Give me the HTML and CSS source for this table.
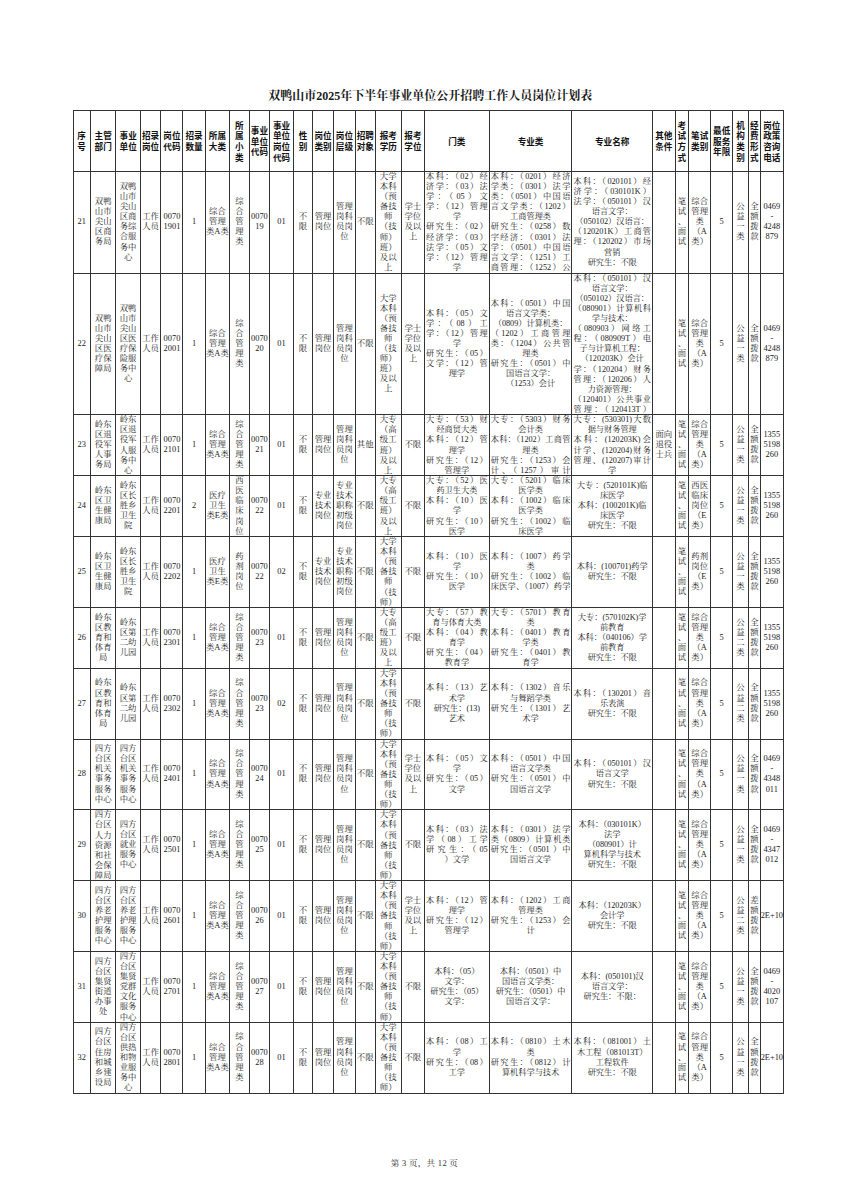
FILE: index.html
```html
<!DOCTYPE html>
<html lang="zh-CN">
<head>
<meta charset="utf-8">
<title>双鸭山市2025年下半年事业单位公开招聘工作人员岗位计划表</title>
<link rel="stylesheet" href="styles.css">
</head>
<body>
<div class="sheet">
<h1 class="title">双鸭山市2025年下半年事业单位公开招聘工作人员岗位计划表</h1>
<table class="plan">
<colgroup>
<col class="k1"><col class="k2"><col class="k3"><col class="k4"><col class="k5"><col class="k6"><col class="k7"><col class="k8"><col class="k9"><col class="k10"><col class="k11"><col class="k12"><col class="k13"><col class="k14"><col class="k15"><col class="k16"><col class="k17"><col class="k18"><col class="k19"><col class="k20"><col class="k21"><col class="k22"><col class="k23"><col class="k24"><col class="k25"><col class="k26">
</colgroup>
<thead>
<tr class="hd">
<th><div>序<br>号</div></th>
<th><div>主管<br>部门</div></th>
<th><div>事业<br>单位</div></th>
<th><div>招录<br>岗位</div></th>
<th><div>岗位<br>代码</div></th>
<th><div>招录<br>数量</div></th>
<th><div>所属<br>大类</div></th>
<th><div>所<br>属<br>小<br>类</div></th>
<th><div>事业<br>单位<br>代码</div></th>
<th><div>事业<br>单位<br>岗位<br>代码</div></th>
<th><div>性<br>别</div></th>
<th><div>岗位<br>类别</div></th>
<th><div>岗位<br>层级</div></th>
<th><div>招聘<br>对象</div></th>
<th><div>报考<br>学历</div></th>
<th><div>报考<br>学位</div></th>
<th><div>门类</div></th>
<th><div>专业类</div></th>
<th><div>专业名称</div></th>
<th><div>其他<br>条件</div></th>
<th><div>考<br>试<br>方<br>式</div></th>
<th><div>笔试<br>类别</div></th>
<th><div>最低<br>服务<br>年限</div></th>
<th><div>机<br>构<br>类<br>别</div></th>
<th><div>经<br>费<br>形<br>式</div></th>
<th><div>岗位<br>政策<br>咨询<br>电话</div></th>
</tr>
</thead>
<tbody>
<!-- 21 -->
<tr class="a">
<td><div>21</div></td>
<td><div>双鸭<br>山市<br>尖山<br>区商<br>务局</div></td>
<td><div>双鸭<br>山市<br>尖山<br>区商<br>务综<br>合服<br>务中<br>心</div></td>
<td><div>工作<br>人员</div></td>
<td><div>0070<br>1901</div></td>
<td><div>1</div></td>
<td><div>综合<br>管理<br>类A类</div></td>
<td><div>综<br>合<br>管<br>理<br>类</div></td>
<td><div>0070<br>19</div></td>
<td><div>01</div></td>
<td><div>不<br>限</div></td>
<td><div>管理<br>岗位</div></td>
<td><div>管理<br>岗科<br>员岗<br>位</div></td>
<td><div>不限</div></td>
<td><div>大学<br>本科<br>（预<br>备技<br>师<br>（技<br>师）<br>班）<br>及以<br>上</div></td>
<td><div>学士<br>学位<br>及以<br>上</div></td>
<td class="w"><div><span>本科：（02）经</span><span>济学：（03）法</span><span>学：（05）文</span><span>学：（12）管理</span><span class="e">学</span><span>研究生：（02）</span><span>经济学：（03）</span><span>法学：（05）文</span><span>学：（12）管理</span><span class="e">学</span></div></td>
<td class="w"><div><span>本科：（0201）经济</span><span>学类：（0301）法学</span><span>类：（0501）中国语</span><span>言文学类：（1202）</span><span class="e">工商管理类</span><span>研究生：（0258）数</span><span>字经济：（0301）法</span><span>学：（0501）中国语</span><span>言文学：（1251）工</span><span>商管理：（1252）公</span><span class="e">共管理</span></div></td>
<td class="w"><div><span>本科：（020101）经</span><span>济学：（030101K）</span><span>法学：（050101）汉</span><span class="e">语言文学：</span><span class="e">（050102）汉语言：</span><span>（120201K）工商管</span><span>理：（120202）市场</span><span class="e">营销</span><span class="e">研究生：不限</span></div></td>
<td><div></div></td>
<td><div>笔<br>试<br>、<br>面<br>试</div></td>
<td><div>综合<br>管理<br>类<br>（A<br>类）</div></td>
<td><div>5</div></td>
<td><div>公<br>益<br>一<br>类</div></td>
<td><div>全<br>额<br>拨<br>款</div></td>
<td><div>0469<br>-<br>4248<br>879</div></td>
</tr>
<!-- 22 -->
<tr class="b">
<td><div>22</div></td>
<td><div>双鸭<br>山市<br>尖山<br>区医<br>疗保<br>障局</div></td>
<td><div>双鸭<br>山市<br>尖山<br>区医<br>疗保<br>险服<br>务中<br>心</div></td>
<td><div>工作<br>人员</div></td>
<td><div>0070<br>2001</div></td>
<td><div>1</div></td>
<td><div>综合<br>管理<br>类A类</div></td>
<td><div>综<br>合<br>管<br>理<br>类</div></td>
<td><div>0070<br>20</div></td>
<td><div>01</div></td>
<td><div>不<br>限</div></td>
<td><div>管理<br>岗位</div></td>
<td><div>管理<br>岗科<br>员岗<br>位</div></td>
<td><div>不限</div></td>
<td><div>大学<br>本科<br>（预<br>备技<br>师<br>（技<br>师）<br>班）<br>及以<br>上</div></td>
<td><div>学士<br>学位<br>及以<br>上</div></td>
<td class="w"><div><span>本科：（05）文</span><span>学：（08）工</span><span>学：（12）管理</span><span class="e">学</span><span>研究生：（05）</span><span>文学：（12）管</span><span class="e">理学</span></div></td>
<td class="w"><div><span>本科：（0501）中国</span><span class="e">语言文学类：</span><span class="e">（0809）计算机类：</span><span>（1202）工商管理</span><span>类：（1204）公共管</span><span class="e">理类</span><span>研究生：（0501）中</span><span class="e">国语言文学：</span><span class="e">（1253）会计</span></div></td>
<td class="w"><div><span>本科：（050101）汉</span><span class="e">语言文学：</span><span class="e">（050102）汉语言：</span><span>（080901）计算机科</span><span class="e">学与技术：</span><span>（080903）网络工</span><span>程：（080909T）电</span><span class="e">子与计算机工程：</span><span class="e">（120203K）会计</span><span>学：（120204）财务</span><span>管理：（120206）人</span><span class="e">力资源管理：</span><span>（120401）公共事业</span><span>管理：（120413T）</span></div></td>
<td><div></div></td>
<td><div>笔<br>试<br>、<br>面<br>试</div></td>
<td><div>综合<br>管理<br>类<br>（A<br>类）</div></td>
<td><div>5</div></td>
<td><div>公<br>益<br>一<br>类</div></td>
<td><div>全<br>额<br>拨<br>款</div></td>
<td><div>0469<br>-<br>4248<br>879</div></td>
</tr>
<!-- 23 -->
<tr class="c">
<td><div>23</div></td>
<td><div>岭东<br>区退<br>役军<br>人事<br>务局</div></td>
<td><div>岭东<br>区退<br>役军<br>人服<br>务中<br>心</div></td>
<td><div>工作<br>人员</div></td>
<td><div>0070<br>2101</div></td>
<td><div>1</div></td>
<td><div>综合<br>管理<br>类A类</div></td>
<td><div>综<br>合<br>管<br>理<br>类</div></td>
<td><div>0070<br>21</div></td>
<td><div>01</div></td>
<td><div>不<br>限</div></td>
<td><div>管理<br>岗位</div></td>
<td><div>管理<br>岗科<br>员岗<br>位</div></td>
<td><div>其他</div></td>
<td><div>大专<br>（高<br>级工<br>班）<br>及以<br>上</div></td>
<td><div>不限</div></td>
<td class="w"><div><span>大专：（53）财</span><span class="e">经商贸大类</span><span>本科：（12）管</span><span class="e">理学</span><span>研究生：（12）</span><span class="e">管理学</span></div></td>
<td class="w"><div><span>大专：（5303）财务</span><span class="e">会计类</span><span>本科：（1202）工商管</span><span class="e">理类</span><span>研究生：（1253）会</span><span>计、（1257）审计</span></div></td>
<td class="w"><div><span>大专：(530301)大数</span><span class="e">据与财务管理</span><span>本科：(120203K)会</span><span>计学、(120204)财务</span><span>管理、(120207)审计</span><span class="e">学</span></div></td>
<td><div>面向<br>退役<br>士兵</div></td>
<td><div>笔<br>试<br>、<br>面<br>试</div></td>
<td><div>综合<br>管理<br>类<br>（A<br>类）</div></td>
<td><div>5</div></td>
<td><div>公<br>益<br>一<br>类</div></td>
<td><div>全<br>额<br>拨<br>款</div></td>
<td><div>1355<br>5198<br>260</div></td>
</tr>
<!-- 24 -->
<tr class="c">
<td><div>24</div></td>
<td><div>岭东<br>区卫<br>生健<br>康局</div></td>
<td><div>岭东<br>区长<br>胜乡<br>卫生<br>院</div></td>
<td><div>工作<br>人员</div></td>
<td><div>0070<br>2201</div></td>
<td><div>2</div></td>
<td><div>医疗<br>卫生<br>类E类</div></td>
<td><div>西<br>医<br>临<br>床<br>岗<br>位</div></td>
<td><div>0070<br>22</div></td>
<td><div>01</div></td>
<td><div>不<br>限</div></td>
<td><div>专业<br>技术<br>岗位</div></td>
<td><div>专业<br>技术<br>职称<br>初级<br>岗位</div></td>
<td><div>不限</div></td>
<td><div>大专<br>（高<br>级工<br>班）<br>及以<br>上</div></td>
<td><div>不限</div></td>
<td class="w"><div><span>大专：（52）医</span><span class="e">药卫生大类</span><span>本科：（10）医</span><span class="e">学</span><span>研究生：（10）</span><span class="e">医学</span></div></td>
<td class="w"><div><span>大专：（5201）临床</span><span class="e">医学类</span><span>本科：（1002）临床</span><span class="e">医学类</span><span>研究生：（1002）临</span><span class="e">床医学</span></div></td>
<td class="w"><div><span class="e">大专 ：(520101K)临</span><span class="e">床医学</span><span class="e">本科：(100201K)临</span><span class="e">床医学</span><span class="e">研究生：不限</span></div></td>
<td><div></div></td>
<td><div>笔<br>试<br>、<br>面<br>试</div></td>
<td><div>西医<br>临床<br>岗位<br>（E<br>类）</div></td>
<td><div>5</div></td>
<td><div>公<br>益<br>一<br>类</div></td>
<td><div>全<br>额<br>拨<br>款</div></td>
<td><div>1355<br>5198<br>260</div></td>
</tr>
<!-- 25 -->
<tr class="d">
<td><div>25</div></td>
<td><div>岭东<br>区卫<br>生健<br>康局</div></td>
<td><div>岭东<br>区长<br>胜乡<br>卫生<br>院</div></td>
<td><div>工作<br>人员</div></td>
<td><div>0070<br>2202</div></td>
<td><div>1</div></td>
<td><div>医疗<br>卫生<br>类E类</div></td>
<td><div>药<br>剂<br>岗<br>位</div></td>
<td><div>0070<br>22</div></td>
<td><div>02</div></td>
<td><div>不<br>限</div></td>
<td><div>专业<br>技术<br>岗位</div></td>
<td><div>专业<br>技术<br>职称<br>初级<br>岗位</div></td>
<td><div>不限</div></td>
<td><div>大学<br>本科<br>（预<br>备技<br>师<br>（技<br>师）<br>班）<br>及以<br>上</div></td>
<td><div>不限</div></td>
<td class="w"><div><span>本科：（10）医</span><span class="e">学</span><span>研究生：（10）</span><span class="e">医学</span></div></td>
<td class="w"><div><span>本科：（1007）药学</span><span class="e">类</span><span>研究生：（1002）临</span><span>床医学、（1007）药学</span></div></td>
<td class="w"><div><span class="e">本科：(100701)药学</span><span class="e">研究生：不限</span></div></td>
<td><div></div></td>
<td><div>笔<br>试<br>、<br>面<br>试</div></td>
<td><div>药剂<br>岗位<br>（E<br>类）</div></td>
<td><div>5</div></td>
<td><div>公<br>益<br>一<br>类</div></td>
<td><div>全<br>额<br>拨<br>款</div></td>
<td><div>1355<br>5198<br>260</div></td>
</tr>
<!-- 26 -->
<tr class="c">
<td><div>26</div></td>
<td><div>岭东<br>区教<br>育和<br>体育<br>局</div></td>
<td><div>岭东<br>区第<br>二幼<br>儿园</div></td>
<td><div>工作<br>人员</div></td>
<td><div>0070<br>2301</div></td>
<td><div>1</div></td>
<td><div>综合<br>管理<br>类A类</div></td>
<td><div>综<br>合<br>管<br>理<br>类</div></td>
<td><div>0070<br>23</div></td>
<td><div>01</div></td>
<td><div>不<br>限</div></td>
<td><div>管理<br>岗位</div></td>
<td><div>管理<br>岗科<br>员岗<br>位</div></td>
<td><div>不限</div></td>
<td><div>大专<br>（高<br>级工<br>班）<br>及以<br>上</div></td>
<td><div>不限</div></td>
<td class="w"><div><span>大专：（57）教</span><span class="e">育与体育大类</span><span>本科：（04）教</span><span class="e">育学</span><span>研究生：（04）</span><span class="e">教育学</span></div></td>
<td class="w"><div><span>大专：（5701）教育</span><span class="e">类</span><span>本科：（0401）教育</span><span class="e">学类</span><span>研究生：（0401）教</span><span class="e">育学</span></div></td>
<td class="w"><div><span class="e">大专：(570102K)学</span><span class="e">前教育</span><span class="e">本科：（040106）学</span><span class="e">前教育</span><span class="e">研究生：不限</span></div></td>
<td><div></div></td>
<td><div>笔<br>试<br>、<br>面<br>试</div></td>
<td><div>综合<br>管理<br>类<br>（A<br>类）</div></td>
<td><div>5</div></td>
<td><div>公<br>益<br>二<br>类</div></td>
<td><div>全<br>额<br>拨<br>款</div></td>
<td><div>1355<br>5198<br>260</div></td>
</tr>
<!-- 27 -->
<tr class="d">
<td><div>27</div></td>
<td><div>岭东<br>区教<br>育和<br>体育<br>局</div></td>
<td><div>岭东<br>区第<br>二幼<br>儿园</div></td>
<td><div>工作<br>人员</div></td>
<td><div>0070<br>2302</div></td>
<td><div>1</div></td>
<td><div>综合<br>管理<br>类A类</div></td>
<td><div>综<br>合<br>管<br>理<br>类</div></td>
<td><div>0070<br>23</div></td>
<td><div>02</div></td>
<td><div>不<br>限</div></td>
<td><div>管理<br>岗位</div></td>
<td><div>管理<br>岗科<br>员岗<br>位</div></td>
<td><div>不限</div></td>
<td><div>大学<br>本科<br>（预<br>备技<br>师<br>（技<br>师）<br>班）<br>及以<br>上</div></td>
<td><div>不限</div></td>
<td class="w"><div><span>本科：（13）艺</span><span class="e">术学</span><span class="e">研究生：(13)</span><span class="e">艺术</span></div></td>
<td class="w"><div><span>本科：（1302）音乐</span><span class="e">与舞蹈学类</span><span>研究生：（1301）艺</span><span class="e">术学</span></div></td>
<td class="w"><div><span>本科：（130201）音</span><span class="e">乐表演</span><span class="e">研究生：不限</span></div></td>
<td><div></div></td>
<td><div>笔<br>试<br>、<br>面<br>试</div></td>
<td><div>综合<br>管理<br>类<br>（A<br>类）</div></td>
<td><div>5</div></td>
<td><div>公<br>益<br>二<br>类</div></td>
<td><div>全<br>额<br>拨<br>款</div></td>
<td><div>1355<br>5198<br>260</div></td>
</tr>
<!-- 28 -->
<tr class="d">
<td><div>28</div></td>
<td><div>四方<br>台区<br>机关<br>事务<br>服务<br>中心</div></td>
<td><div>四方<br>台区<br>机关<br>事务<br>服务<br>中心</div></td>
<td><div>工作<br>人员</div></td>
<td><div>0070<br>2401</div></td>
<td><div>1</div></td>
<td><div>综合<br>管理<br>类A类</div></td>
<td><div>综<br>合<br>管<br>理<br>类</div></td>
<td><div>0070<br>24</div></td>
<td><div>01</div></td>
<td><div>不<br>限</div></td>
<td><div>管理<br>岗位</div></td>
<td><div>管理<br>岗科<br>员岗<br>位</div></td>
<td><div>不限</div></td>
<td><div>大学<br>本科<br>（预<br>备技<br>师<br>（技<br>师）<br>班）<br>及以<br>上</div></td>
<td><div>学士<br>学位<br>及以<br>上</div></td>
<td class="w"><div><span>本科：（05）文</span><span class="e">学</span><span>研究生：（05）</span><span class="e">文学</span></div></td>
<td class="w"><div><span>本科：（0501）中国</span><span class="e">语言文学类</span><span>研究生：（0501）中</span><span class="e">国语言文学</span></div></td>
<td class="w"><div><span>本科：（050101）汉</span><span class="e">语言文学</span><span class="e">研究生：不限</span></div></td>
<td><div></div></td>
<td><div>笔<br>试<br>、<br>面<br>试</div></td>
<td><div>综合<br>管理<br>类<br>（A<br>类）</div></td>
<td><div>5</div></td>
<td><div>公<br>益<br>一<br>类</div></td>
<td><div>全<br>额<br>拨<br>款</div></td>
<td><div>0469<br>-<br>4348<br>011</div></td>
</tr>
<!-- 29 -->
<tr class="d">
<td><div>29</div></td>
<td><div>四方<br>台区<br>人力<br>资源<br>和社<br>会保<br>障局</div></td>
<td><div>四方<br>台区<br>就业<br>服务<br>中心</div></td>
<td><div>工作<br>人员</div></td>
<td><div>0070<br>2501</div></td>
<td><div>1</div></td>
<td><div>综合<br>管理<br>类A类</div></td>
<td><div>综<br>合<br>管<br>理<br>类</div></td>
<td><div>0070<br>25</div></td>
<td><div>01</div></td>
<td><div>不<br>限</div></td>
<td><div>管理<br>岗位</div></td>
<td><div>管理<br>岗科<br>员岗<br>位</div></td>
<td><div>不限</div></td>
<td><div>大学<br>本科<br>（预<br>备技<br>师<br>（技<br>师）<br>班）<br>及以<br>上</div></td>
<td><div>不限</div></td>
<td class="w"><div><span>本科：（03）法</span><span>学（08）工学</span><span>研究生：（05</span><span class="e">）文学</span></div></td>
<td class="w"><div><span>本科：（0301）法学</span><span>类（0809）计算机类</span><span>研究生：（0501 ）中</span><span class="e">国语言文学</span></div></td>
<td class="w"><div><span class="e">本科：（030101K）</span><span class="e">法学</span><span class="e">（080901）计</span><span class="e">算机科学与技术</span><span class="e">研究生：不限</span></div></td>
<td><div></div></td>
<td><div>笔<br>试<br>、<br>面<br>试</div></td>
<td><div>综合<br>管理<br>类<br>（A<br>类）</div></td>
<td><div>5</div></td>
<td><div>公<br>益<br>一<br>类</div></td>
<td><div>全<br>额<br>拨<br>款</div></td>
<td><div>0469<br>-<br>4347<br>012</div></td>
</tr>
<!-- 30 -->
<tr class="d">
<td><div>30</div></td>
<td><div>四方<br>台区<br>养老<br>护理<br>服务<br>中心</div></td>
<td><div>四方<br>台区<br>养老<br>护理<br>服务<br>中心</div></td>
<td><div>工作<br>人员</div></td>
<td><div>0070<br>2601</div></td>
<td><div>1</div></td>
<td><div>综合<br>管理<br>类A类</div></td>
<td><div>综<br>合<br>管<br>理<br>类</div></td>
<td><div>0070<br>26</div></td>
<td><div>01</div></td>
<td><div>不<br>限</div></td>
<td><div>管理<br>岗位</div></td>
<td><div>管理<br>岗科<br>员岗<br>位</div></td>
<td><div>不限</div></td>
<td><div>大学<br>本科<br>（预<br>备技<br>师<br>（技<br>师）<br>班）<br>及以<br>上</div></td>
<td><div>学士<br>学位<br>及以<br>上</div></td>
<td class="w"><div><span>本科：（12）管</span><span class="e">理学</span><span>研究生：（12）</span><span class="e">管理学</span></div></td>
<td class="w"><div><span>本科：（1202）工商</span><span class="e">管理类</span><span>研究生：（1253）会</span><span class="e">计</span></div></td>
<td class="w"><div><span class="e">本科：（120203K）</span><span class="e">会计学</span><span class="e">研究生：不限</span></div></td>
<td><div></div></td>
<td><div>笔<br>试<br>、<br>面<br>试</div></td>
<td><div>综合<br>管理<br>类<br>（A<br>类）</div></td>
<td><div>5</div></td>
<td><div>公<br>益<br>二<br>类</div></td>
<td><div>差<br>额<br>拨<br>款</div></td>
<td><div>2E+10</div></td>
</tr>
<!-- 31 -->
<tr class="d">
<td><div>31</div></td>
<td><div>四方<br>台区<br>集贤<br>街道<br>办事<br>处</div></td>
<td><div>四方<br>台区<br>集贤<br>党群<br>文化<br>服务<br>中心</div></td>
<td><div>工作<br>人员</div></td>
<td><div>0070<br>2701</div></td>
<td><div>1</div></td>
<td><div>综合<br>管理<br>类A类</div></td>
<td><div>综<br>合<br>管<br>理<br>类</div></td>
<td><div>0070<br>27</div></td>
<td><div>01</div></td>
<td><div>不<br>限</div></td>
<td><div>管理<br>岗位</div></td>
<td><div>管理<br>岗科<br>员岗<br>位</div></td>
<td><div>不限</div></td>
<td><div>大学<br>本科<br>（预<br>备技<br>师<br>（技<br>师）<br>班）<br>及以<br>上</div></td>
<td><div>不限</div></td>
<td class="w"><div><span class="e">本科：（05）</span><span class="e">文学：</span><span class="e">研究生：（05）</span><span class="e">文学：</span></div></td>
<td class="w"><div><span class="e">本科：（0501）中</span><span class="e">国语言文学类：</span><span class="e">研究生：（0501）中</span><span class="e">国语言文学：</span></div></td>
<td class="w"><div><span class="e">本科：(050101)汉</span><span class="e">语言文学：</span><span class="e">研究生：不限：</span></div></td>
<td><div></div></td>
<td><div>笔<br>试<br>、<br>面<br>试</div></td>
<td><div>综合<br>管理<br>类<br>（A<br>类）</div></td>
<td><div>5</div></td>
<td><div>公<br>益<br>一<br>类</div></td>
<td><div>全<br>额<br>拨<br>款</div></td>
<td><div>0469<br>-<br>4020<br>107</div></td>
</tr>
<!-- 32 -->
<tr class="d">
<td><div>32</div></td>
<td><div>四方<br>台区<br>住房<br>和城<br>乡建<br>设局</div></td>
<td><div>四方<br>台区<br>供热<br>和物<br>业服<br>务中<br>心</div></td>
<td><div>工作<br>人员</div></td>
<td><div>0070<br>2801</div></td>
<td><div>1</div></td>
<td><div>综合<br>管理<br>类A类</div></td>
<td><div>综<br>合<br>管<br>理<br>类</div></td>
<td><div>0070<br>28</div></td>
<td><div>01</div></td>
<td><div>不<br>限</div></td>
<td><div>管理<br>岗位</div></td>
<td><div>管理<br>岗科<br>员岗<br>位</div></td>
<td><div>不限</div></td>
<td><div>大学<br>本科<br>（预<br>备技<br>师<br>（技<br>师）<br>班）<br>及以<br>上</div></td>
<td><div>不限</div></td>
<td class="w"><div><span>本科：（08）工</span><span class="e">学</span><span>研究生：（08）</span><span class="e">工学</span></div></td>
<td class="w"><div><span>本科：（0810）土木</span><span class="e">类</span><span>研究生：（0812）计</span><span class="e">算机科学与技术</span></div></td>
<td class="w"><div><span>本科：（081001）土</span><span class="e">木工程（081013T）</span><span class="e">工程软件</span><span class="e">研究生：不限</span></div></td>
<td><div></div></td>
<td><div>笔<br>试<br>、<br>面<br>试</div></td>
<td><div>综合<br>管理<br>类<br>（A<br>类）</div></td>
<td><div>5</div></td>
<td><div>公<br>益<br>一<br>类</div></td>
<td><div>全<br>额<br>拨<br>款</div></td>
<td><div>2E+10</div></td>
</tr>
</tbody>
</table>
<p class="foot">第 3 页，共 12 页</p>
</div>
</body>
</html>
```
FILE: styles.css
```css
* { box-sizing: border-box; }

body {
  margin: 0;
  background: #ffffff;
  color: #222222;
  font-family: "Liberation Serif", "Noto Serif CJK SC", "Noto Sans CJK SC", serif;
}

.sheet {
  padding: 89px 0 0 72.5px;
}

.title {
  width: 710.6px;
  margin: 0 0 7px;
  padding-left: 5px;
  text-align: center;
  font-size: 12px;
  line-height: 14px;
  font-weight: bold;
  color: #1a1a1a;
}

.plan {
  border-collapse: collapse;
  table-layout: fixed;
  width: 710.6px;
  font-size: 8.4px;
  line-height: 10.1px;
}

.plan th,
.plan td {
  border: 1px solid #333333;
  padding: 0;
  text-align: center;
  vertical-align: top;
}

.plan th > div,
.plan td > div {
  display: flex;
  flex-direction: column;
  overflow: hidden;
  white-space: nowrap;
}

.plan th > div::before,
.plan th > div::after,
.plan td > div::before,
.plan td > div::after {
  content: "";
  flex: 1 1 0;
}

.plan th {
  font-family: "Noto Sans CJK SC", sans-serif;
  font-weight: bold;
  font-size: 8.6px;
  line-height: 10.6px;
  color: #111111;
}

.plan tr.hd > th > div { height: 60px; }
.plan tr.a > td > div { height: 100.7px; }
.plan tr.b > td > div { height: 140.6px; }
.plan tr.c > td > div { height: 59.9px; }
.plan tr.d > td > div { height: 69.8px; }

.plan td.w { font-size: 8.2px; }

.plan td.w span {
  display: block;
  padding: 0 1px;
  text-align: justify;
  text-align-last: justify;
}

.plan td.w span.e {
  text-align-last: center;
}

.k1 { width: 17.3px; }
.k2 { width: 25.7px; }
.k3 { width: 24.3px; }
.k4 { width: 20.7px; }
.k5 { width: 22px; }
.k6 { width: 22.3px; }
.k7 { width: 24.3px; }
.k8 { width: 19.7px; }
.k9 { width: 20.3px; }
.k10 { width: 24px; }
.k11 { width: 19px; }
.k12 { width: 21px; }
.k13 { width: 21.7px; }
.k14 { width: 20px; }
.k15 { width: 26px; }
.k16 { width: 23.3px; }
.k17 { width: 64.7px; }
.k18 { width: 82.7px; }
.k19 { width: 80.6px; }
.k20 { width: 22.7px; }
.k21 { width: 13.3px; }
.k22 { width: 22.4px; }
.k23 { width: 21.6px; }
.k24 { width: 16px; }
.k25 { width: 11.7px; }
.k26 { width: 23.3px; }

.foot {
  margin: 64px 0 0 -72.5px;
  width: 849px;
  text-align: center;
  font-size: 8.5px;
  line-height: 10px;
  letter-spacing: 0.3px;
  color: #333333;
}
```
